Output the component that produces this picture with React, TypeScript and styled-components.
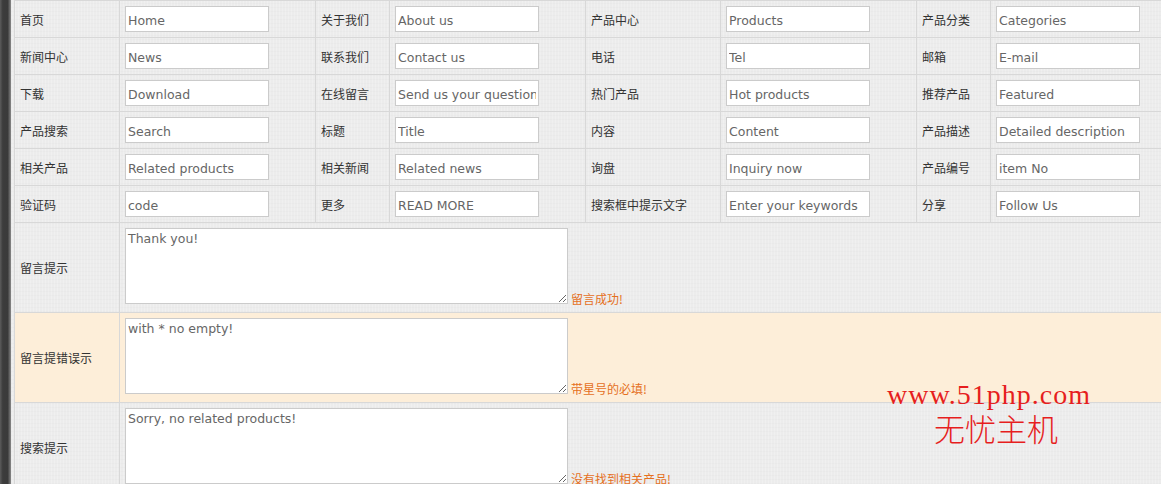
import React from "react";
import styled, {createGlobalStyle, css} from "styled-components";

const GlobalStyle = createGlobalStyle`
  html, body {
    margin: 0;
    padding: 0;
    overflow: hidden;
  }
  body {
    background: #ebebeb;
  }
`;

const Page = styled.div`
  position: relative;
  display: flex;
  align-items: flex-start;
  width: 1161px;
  height: 484px;
  overflow: hidden;
  background-color: #ececec;
  background-image: repeating-linear-gradient(0deg, rgba(0, 0, 0, 0.012) 0 1px, transparent 1px 4px),
  repeating-linear-gradient(90deg, rgba(255, 255, 255, 0.2) 0 1px, transparent 1px 3px);
`;

const Strip = styled.div`
  flex: 0 0 11px;
  height: 484px;
  margin-right: 3px;
  background: linear-gradient(to right, #5c5c5c, #3c3c3c 25%, #3a3a3a 70%, #8a8a8a);
`;

const Grid = styled.div`
  flex: none;
  display: grid;
  grid-template-columns: 105px 196px 74px 196px 135px 196px 74px 196px;
  grid-template-rows: repeat(6, 37px) repeat(3, 90px);
  border-top: 1px solid #d8d8d8;
  border-left: 1px solid #d8d8d8;
`;

const Cell = styled.div<{ $tint?: boolean }>`
  box-sizing: border-box;
  border-right: 1px solid #d8d8d8;
  border-bottom: 1px solid #d8d8d8;
  background: ${p => (p.$tint ? "#fdeed9" : "transparent")};
`;

const Label = styled(Cell)`
  display: flex;
  align-items: center;
  padding-left: 5px;
  font: 12px "Noto Sans CJK SC", sans-serif;
  color: #333;
`;

const FieldCell = styled(Cell)`
  display: flex;
  align-items: center;
  padding-left: 5px;
`;

const WideCell = styled(Cell)`
  grid-column: span 7;
  padding: 5px 0 0 5px;
  font: 12px "Noto Sans CJK SC", sans-serif;
  white-space: nowrap;
`;

const fieldText = css`
  box-sizing: border-box;
  margin: 0;
  border: 1px solid #cbcbcb;
  background: #fff;
  font: 12.5px "DejaVu Sans", sans-serif;
  color: #666;
  outline: none;
`;

const Field = styled.input`
  ${fieldText};
  width: 144px;
  height: 26px;
  padding: 2px 2px 0;
`;

const Area = styled.textarea`
  ${fieldText};
  width: 443px;
  height: 76px;
  padding: 2px;
  line-height: 15px;
  vertical-align: baseline;
`;

const Note = styled.span`
  margin-left: 3px;
  color: #e5701e;
`;

const Watermark = styled.div`
  position: absolute;
  left: 879px;
  top: 380px;
  width: 220px;
  text-align: center;
  color: #e61e1e;
  pointer-events: none;
`;

const MarkUrl = styled.div`
  font: 28px/30px "Liberation Serif", serif;
  letter-spacing: 1px;
`;

const MarkName = styled.div`
  padding-left: 14px;
  font: 31px/36px "Noto Sans CJK SC", sans-serif;
  font-weight: 300;
`;

const fields = [
    ["首页", "Home", "关于我们", "About us", "产品中心", "Products", "产品分类", "Categories"],
    ["新闻中心", "News", "联系我们", "Contact us", "电话", "Tel", "邮箱", "E-mail"],
    ["下载", "Download", "在线留言", "Send us your question", "热门产品", "Hot products", "推荐产品", "Featured"],
    ["产品搜索", "Search", "标题", "Title", "内容", "Content", "产品描述", "Detailed description"],
    ["相关产品", "Related products", "相关新闻", "Related news", "询盘", "Inquiry now", "产品编号", "item No"],
    ["验证码", "code", "更多", "READ MORE", "搜索框中提示文字", "Enter your keywords", "分享", "Follow Us"],
];

const messages = [
    {label: "留言提示", text: "Thank you!", note: "留言成功!", tint: false},
    {label: "留言提错误示", text: "with * no empty!", note: "带星号的必填!", tint: true},
    {label: "搜索提示", text: "Sorry, no related products!", note: "没有找到相关产品!", tint: false},
];

const App = () => {
    return (
        <Page>
            <GlobalStyle/>
            <Strip/>
            <Grid>
                {fields.map((row, r) =>
                    row.map((item, i) =>
                        i % 2 === 0
                            ? <Label key={`${r}-${i}`}>{item}</Label>
                            : <FieldCell key={`${r}-${i}`}>
                                <Field defaultValue={item}/>
                            </FieldCell>
                    )
                )}
                {messages.map(m => (
                    <React.Fragment key={m.label}>
                        <Label $tint={m.tint}>{m.label}</Label>
                        <WideCell $tint={m.tint}>
                            <Area defaultValue={m.text}/>
                            <Note>{m.note}</Note>
                        </WideCell>
                    </React.Fragment>
                ))}
            </Grid>
            <Watermark>
                <MarkUrl>www.51php.com</MarkUrl>
                <MarkName>无忧主机</MarkName>
            </Watermark>
        </Page>
    );
};

export default App;
